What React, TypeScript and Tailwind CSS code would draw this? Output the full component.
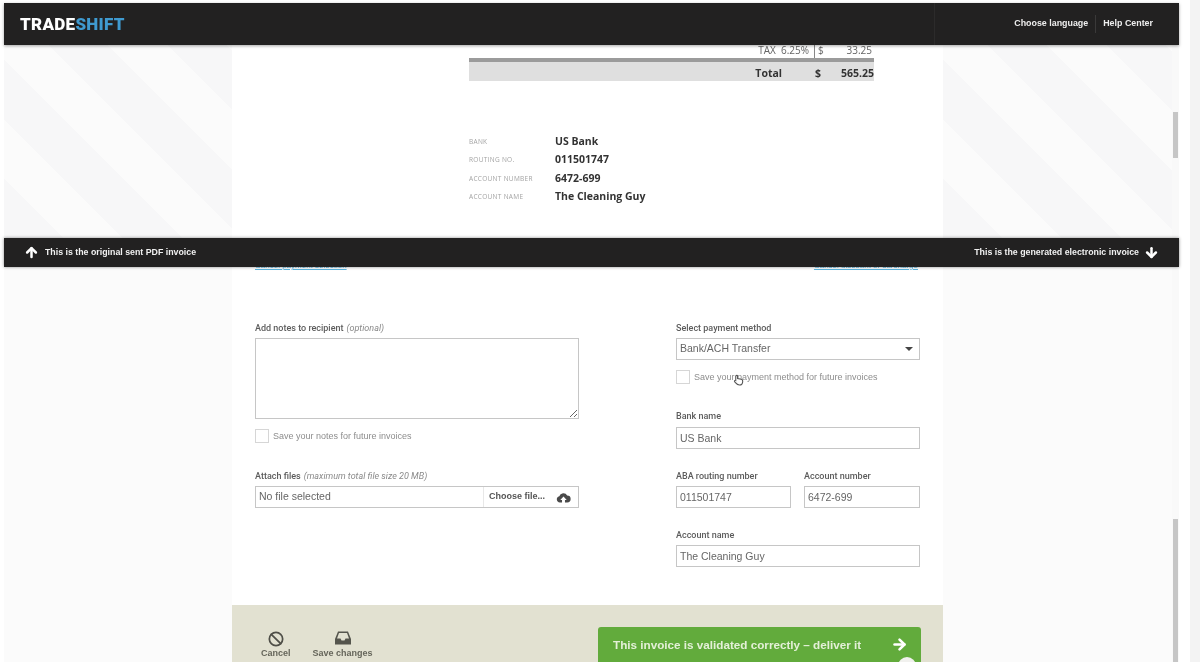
import { ArrowDown, ArrowRight, ArrowUp, Ban } from "lucide-react";

const SANS = "font-['Liberation_Sans',Arial,sans-serif]";
const STRIPES =
  "bg-[repeating-linear-gradient(45deg,#f7f7f8_0px,#f7f7f8_42px,#fbfbfb_42px,#fbfbfb_84px)]";

function Label({ children, note }: { children: string; note?: string }) {
  return (
    <div className="h-[12px] text-[9px] leading-[12px] font-medium text-[#5c5c5c] whitespace-nowrap font-['Roboto',sans-serif]">
      {children}
      {note && <em className="ml-[3px] font-normal text-[#8a8a8a]">{note}</em>}
    </div>
  );
}

function TextInput({ value, className = "" }: { value: string; className?: string }) {
  return (
    <input
      readOnly
      value={value}
      className={`block h-[22px] w-full border-[1.5px] border-[#c6c6c6] bg-white px-[3px] text-[10.5px] text-[#666] outline-none ${SANS} ${className}`}
    />
  );
}

function SaveCheck({ children }: { children: string }) {
  return (
    <label className="flex h-[14px] items-center gap-[4px] text-[9px] text-[#8d8d8d] whitespace-nowrap">
      <input type="checkbox" className="h-[14px] w-[14px] appearance-none border-[1.5px] border-[#d6d6d6] bg-white" />
      <span className="pt-[1px]">{children}</span>
    </label>
  );
}

function BankRow({ label, value }: { label: string; value: string }) {
  return (
    <div className="flex h-[18.4px] items-center">
      <span className="w-[86px] text-[6.5px] uppercase tracking-[0.3px] text-[#a3a3a3]">{label}</span>
      <span className="text-[10.5px] font-bold text-[#333]">{value}</span>
    </div>
  );
}

function Scrollbar({ thumb }: { thumb: string }) {
  return (
    <div className="w-[7px] shrink-0 bg-[#f9f9f9] px-[1px]">
      <div className={`w-[5px] bg-[#c6c6c6] ${thumb}`} />
    </div>
  );
}

export default function App() {
  return (
    <div className={`flex h-[662px] w-[1200px] overflow-hidden bg-white pl-[4px] blur-[0.5px] ${SANS}`}>
      <main className="relative flex w-[1175px] shrink-0 flex-col pt-[3px]">
        {/* top bar */}
        <header className="relative z-10 flex h-[42px] shrink-0 items-center bg-[#222121] pl-[16px] shadow-[0_1px_3px_rgba(0,0,0,0.35)]">
          <div className="text-[17px] font-black leading-none tracking-[0.3px] text-white font-['Roboto',sans-serif]">
            TRADE<span className="text-[#3f9ad0]">SHIFT</span>
          </div>
          <div className="ml-auto flex h-full items-center text-[8.9px] font-bold text-[#eee]">
            <div className="mr-[79px] h-full w-px bg-[#2c2b2b]" />
            <span>Choose language</span>
            <div className="mx-[7px] h-[18px] w-px bg-[#3a3939]" />
            <span className="mr-[26px]">Help Center</span>
          </div>
        </header>

        {/* original PDF pane */}
        <section className="flex h-[193px] shrink-0 overflow-hidden">
          <div className={`w-[228px] shrink-0 ${STRIPES}`} />
          <div className="w-[711px] shrink-0 overflow-hidden bg-white pl-[237px] font-['Open_Sans',sans-serif]">
            <div className="flex h-[13px] w-[405px] justify-end text-[10px] leading-[10px] text-[#666]">
              <span>TAX&nbsp; 6.25%</span>
              <span className="ml-[5px] w-[12px] border-l border-[#888] pl-[3px]">$</span>
              <span className="w-[48px] pr-[2px] text-right">33.25</span>
            </div>
            <div className="flex h-[23px] w-[405px] items-center justify-end border-t-[4px] border-[#9b9b9b] bg-[#dfdfdf] pt-[4px] text-[10.5px] font-bold text-[#333]">
              <span className="mr-[33px]">Total</span>
              <span className="w-[12px]">$</span>
              <span className="w-[47px] text-right">565.25</span>
            </div>
            <div className="mt-[51.5px] w-[405px]">
              <BankRow label="Bank" value="US Bank" />
              <BankRow label="Routing no." value="011501747" />
              <BankRow label="Account number" value="6472-699" />
              <BankRow label="Account name" value="The Cleaning Guy" />
            </div>
          </div>
          <div className={`flex-1 ${STRIPES}`} />
          <Scrollbar thumb="mt-[67px] h-[46px]" />
        </section>

        {/* divider between the panes */}
        <div className="relative z-10 flex h-[29px] shrink-0 items-center justify-between bg-[#222121] pl-[20px] pr-[20px] text-[8.8px] font-bold text-[#f0f0f0] shadow-[0_0_3px_rgba(0,0,0,0.45)]">
          <div className="flex items-center gap-[6px]">
            <ArrowUp size={15} strokeWidth={4} className="text-white" />
            This is the original sent PDF invoice
          </div>
          <div className="flex items-center gap-[5px]">
            This is the generated electronic invoice
            <ArrowDown size={15} strokeWidth={4} className="text-white" />
          </div>
        </div>

        {/* generated invoice pane */}
        <section className="flex min-h-0 flex-1 overflow-hidden bg-[#fbfbfb]">
          <div className="w-[228px] shrink-0" />
          <div className="flex w-[711px] shrink-0 flex-col bg-white">
            <div className="-mt-[5px] flex h-[8px] justify-between overflow-hidden px-[23px] text-[8px] leading-[8px] text-[#5bb5e0] underline">
              <span>Cancel payment selection</span>
              <span className="mr-[2px]">Cancel discount or surcharge</span>
            </div>
            <div className="flex flex-1 justify-between pl-[23px] pr-[23px] pt-[52px]">
              <div className="w-[324px]">
                <Label note="(optional)">Add notes to recipient</Label>
                <textarea
                  readOnly
                  className="mt-[4px] block h-[81px] w-full border-[1.5px] border-[#c6c6c6] bg-white outline-none"
                />
                <div className="mt-[10px]">
                  <SaveCheck>Save your notes for future invoices</SaveCheck>
                </div>
                <div className="mt-[27px]">
                  <Label note="(maximum total file size 20 MB)">Attach files</Label>
                </div>
                <div className="mt-[4px] flex h-[22px] items-center border-[1.5px] border-[#c6c6c6] text-[10.5px] text-[#666]">
                  <span className="flex-1 pl-[3px]">No file selected</span>
                  <span className="flex h-full items-center border-l border-[#e8e8e8] pl-[5px] text-[9px] font-bold text-[#555]">
                    Choose file...
                  </span>
                  <svg viewBox="0 0 16 12" className="ml-[11px] mr-[7px] h-[11px] w-[15px]">
                    <path
                      fill="#4a4a4a"
                      d="M4 11.5A3.5 3.5 0 0 1 3.4 4.6 4.6 4.6 0 0 1 12 3.9a3.8 3.8 0 0 1 0 7.6H9.6V8.6h1.9L8 4.8 4.5 8.6h1.9v2.9Z"
                    />
                  </svg>
                </div>
              </div>
              <div className="w-[244px]">
                <Label>Select payment method</Label>
                <div className="mt-[4px] flex h-[22px] items-center justify-between border-[1.5px] border-[#c6c6c6] pl-[3px] pr-[6px] text-[10.5px] text-[#666]">
                  Bank/ACH Transfer
                  <span className="h-0 w-0 border-x-[4px] border-t-[4px] border-x-transparent border-t-[#444]" />
                </div>
                <div className="relative mt-[10px]">
                  <SaveCheck>Save your payment method for future invoices</SaveCheck>
                  <svg viewBox="0 0 12 14" className="absolute left-[57px] top-[3px] h-[13px] w-[11px]">
                    <path
                      fill="#fff"
                      stroke="#555"
                      strokeWidth="1.2"
                      d="M3 8V3.5a1 1 0 0 1 2 0V6l4 .7c1 .2 1.6.8 1.6 1.8 0 2.4-1 4.5-3.6 4.5-2.4 0-3-1-5.2-3.6-.7-.9.4-2 1.2-1.4Z"
                    />
                  </svg>
                </div>
                <div className="mt-[26px]">
                  <Label>Bank name</Label>
                </div>
                <TextInput value="US Bank" className="mt-[5px]" />
                <div className="mt-[21px] flex gap-[13px]">
                  <div className="w-[115px]">
                    <Label>ABA routing number</Label>
                    <TextInput value="011501747" className="mt-[4px]" />
                  </div>
                  <div className="flex-1">
                    <Label>Account number</Label>
                    <TextInput value="6472-699" className="mt-[4px]" />
                  </div>
                </div>
                <div className="mt-[21px]">
                  <Label>Account name</Label>
                </div>
                <TextInput value="The Cleaning Guy" className="mt-[4px]" />
              </div>
            </div>

            {/* action footer */}
            <footer className="flex h-[57px] shrink-0 overflow-hidden bg-[#e2e1d1] pl-[29px] pr-[22px]">
              <div className="flex flex-col items-center pt-[26px] text-[9px] font-bold text-[#66665b]">
                <Ban size={16} strokeWidth={2.6} className="text-[#4f4f48]" />
                <span>Cancel</span>
              </div>
              <div className="ml-[22px] flex flex-col items-center pt-[26px] text-[9px] font-bold text-[#66665b]">
                <svg viewBox="0 0 16 14" className="h-[14px] w-[16px]">
                  <path
                    fill="#55554d"
                    fillRule="evenodd"
                    d="M3 .5h10L16 8v5.5H0V8ZM4 2 2 7.5h3.5L6.5 9.5h3l1-2H14L12 2Z"
                  />
                </svg>
                <span className="mt-[2px]">Save changes</span>
              </div>
              <div className="relative ml-auto mt-[22px] flex h-[50px] w-[323px] items-start justify-between rounded-[3px] bg-[#62ab3c] pl-[15px] pr-[13px] pt-[9px] text-[11.7px] font-bold text-[#e4f0d8]">
                This invoice is validated correctly – deliver it
                <ArrowRight size={17} strokeWidth={3.6} className="text-white" />
                <span className="absolute left-[300px] top-[30px] h-[18px] w-[18px] rounded-full bg-[#f1f1ee]" />
              </div>
            </footer>
          </div>
          <div className="flex-1" />
          <Scrollbar thumb="mt-[252px] h-[200px]" />
        </section>
      </main>
      <div className="w-[11px] shrink-0 bg-white" />
      <div className="flex-1 bg-[#f3f3f3]" />
    </div>
  );
}
